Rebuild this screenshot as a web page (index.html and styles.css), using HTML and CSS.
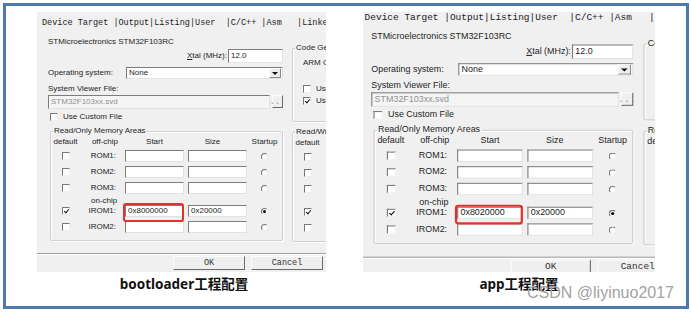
FILE: index.html
```html
<!DOCTYPE html>
<html lang="zh-CN">
<head>
  <meta charset="UTF-8">
  <meta name="viewport" content="width=device-width, initial-scale=1.0">
  <title>bootloader / app 工程配置</title>
  <link rel="stylesheet" href="styles.css">
</head>
<body>

<div class="frame">
  <div class="pair">

    <!-- bootloader 工程 -->
    <figure class="shot">
      <div class="win win-boot">
        <div class="dlg">
          <div class="tabs">Device Target |Output|Listing|User  |C/C++ |Asm   |Linker |Debug |Utilities</div>
          <div class="pane">
            <div class="col-main">
              <p class="device">STMicroelectronics STM32F103RC</p>
              <div class="xtal-row"><span><u>X</u>tal (MHz):</span><span class="field xtal">12.0</span></div>
              <div class="os-row"><span class="lbl">Operating system:</span><span class="field combo">None<i class="arrow"></i></span></div>
              <p class="svf-lbl">System Viewer File:</p>
              <div class="svf-row"><span class="field off">STM32F103xx.svd</span><span class="btn dots">...</span></div>
              <div class="check-row"><span class="cb"></span>Use Custom File</div>
              <fieldset class="group mem">
                <legend>Read/Only Memory Areas</legend>
                <div class="mhead"><span>default</span><span class="oc">off-chip</span><span class="c">Start</span><span class="c sz">Size</span><span class="c">Startup</span></div>
                <div class="mrow first"><span class="cb"></span><span class="ml">ROM1:</span><span class="field"></span><span class="field"></span><span class="rd"></span></div>
                <div class="mrow"><span class="cb"></span><span class="ml">ROM2:</span><span class="field"></span><span class="field"></span><span class="rd"></span></div>
                <div class="mrow"><span class="cb"></span><span class="ml">ROM3:</span><span class="field"></span><span class="field"></span><span class="rd"></span></div>
                <div class="onchip">on-chip</div>
                <div class="mrow irom"><span class="cb on"></span><span class="ml">IROM1:</span><span class="field hot">0x8000000</span><span class="field">0x20000</span><span class="rd on"></span></div>
                <div class="mrow"><span class="cb"></span><span class="ml">IROM2:</span><span class="field"></span><span class="field"></span><span class="rd"></span></div>
              </fieldset>
            </div>
            <div class="col-side">
              <fieldset class="group code">
                <legend>Code Generation</legend>
                <p class="arm">ARM Compiler:</p>
                <div class="check-row opt"><span class="cb"></span>Use Cross-Module Optimization</div>
                <div class="check-row opt2"><span class="cb on"></span>Use MicroLIB</div>
              </fieldset>
              <fieldset class="group mem rw">
                <legend>Read/Write Memory Areas</legend>
                <div class="mhead"><span>default</span><span class="oc">off-chip</span><span class="c">Start</span><span class="c sz">Size</span><span class="c">NoInit</span></div>
                <div class="mrow first"><span class="cb"></span><span class="ml">RAM1:</span><span class="field"></span><span class="field"></span><span class="cb"></span></div>
                <div class="mrow"><span class="cb"></span><span class="ml">RAM2:</span><span class="field"></span><span class="field"></span><span class="cb"></span></div>
                <div class="mrow"><span class="cb"></span><span class="ml">RAM3:</span><span class="field"></span><span class="field"></span><span class="cb"></span></div>
                <div class="onchip">on-chip</div>
                <div class="mrow irom"><span class="cb on"></span><span class="ml">IRAM1:</span><span class="field">0x20000000</span><span class="field">0xC000</span><span class="cb"></span></div>
                <div class="mrow"><span class="cb"></span><span class="ml">IRAM2:</span><span class="field"></span><span class="field"></span><span class="cb"></span></div>
              </fieldset>
            </div>
          </div>
          <div class="foot"><span class="btn">OK</span><span class="btn">Cancel</span><span class="btn">Defaults</span></div>
        </div>
      </div>
      <figcaption class="cap cap-boot">bootloader工程配置</figcaption>
    </figure>

    <!-- app 工程 -->
    <figure class="shot">
      <div class="win win-app">
        <div class="dlg dlg-app">
          <div class="tabs">Device Target |Output|Listing|User  |C/C++ |Asm   |Linker |Debug |Utilities</div>
          <div class="pane">
            <div class="col-main">
              <p class="device">STMicroelectronics STM32F103RC</p>
              <div class="xtal-row"><span><u>X</u>tal (MHz):</span><span class="field xtal">12.0</span></div>
              <div class="os-row"><span class="lbl">Operating system:</span><span class="field combo">None<i class="arrow"></i></span></div>
              <p class="svf-lbl">System Viewer File:</p>
              <div class="svf-row"><span class="field off">STM32F103xx.svd</span><span class="btn dots">...</span></div>
              <div class="check-row"><span class="cb"></span>Use Custom File</div>
              <fieldset class="group mem">
                <legend>Read/Only Memory Areas</legend>
                <div class="mhead"><span>default</span><span class="oc">off-chip</span><span class="c">Start</span><span class="c sz">Size</span><span class="c">Startup</span></div>
                <div class="mrow first"><span class="cb"></span><span class="ml">ROM1:</span><span class="field"></span><span class="field"></span><span class="rd"></span></div>
                <div class="mrow"><span class="cb"></span><span class="ml">ROM2:</span><span class="field"></span><span class="field"></span><span class="rd"></span></div>
                <div class="mrow"><span class="cb"></span><span class="ml">ROM3:</span><span class="field"></span><span class="field"></span><span class="rd"></span></div>
                <div class="onchip">on-chip</div>
                <div class="mrow irom"><span class="cb on"></span><span class="ml">IROM1:</span><span class="field hot">0x8020000</span><span class="field">0x20000</span><span class="rd on"></span></div>
                <div class="mrow"><span class="cb"></span><span class="ml">IROM2:</span><span class="field"></span><span class="field"></span><span class="rd"></span></div>
              </fieldset>
            </div>
            <div class="col-side">
              <fieldset class="group code">
                <legend>Code Generation</legend>
                <p class="arm">ARM Compiler:</p>
                <div class="check-row opt"><span class="cb"></span>Use Cross-Module Optimization</div>
                <div class="check-row opt2"><span class="cb on"></span>Use MicroLIB</div>
              </fieldset>
              <fieldset class="group mem rw">
                <legend>Read/Write Memory Areas</legend>
                <div class="mhead"><span>default</span><span class="oc">off-chip</span><span class="c">Start</span><span class="c sz">Size</span><span class="c">NoInit</span></div>
                <div class="mrow first"><span class="cb"></span><span class="ml">RAM1:</span><span class="field"></span><span class="field"></span><span class="cb"></span></div>
                <div class="mrow"><span class="cb"></span><span class="ml">RAM2:</span><span class="field"></span><span class="field"></span><span class="cb"></span></div>
                <div class="mrow"><span class="cb"></span><span class="ml">RAM3:</span><span class="field"></span><span class="field"></span><span class="cb"></span></div>
                <div class="onchip">on-chip</div>
                <div class="mrow irom"><span class="cb on"></span><span class="ml">IRAM1:</span><span class="field">0x20000000</span><span class="field">0xC000</span><span class="cb"></span></div>
                <div class="mrow"><span class="cb"></span><span class="ml">IRAM2:</span><span class="field"></span><span class="field"></span><span class="cb"></span></div>
              </fieldset>
            </div>
          </div>
          <div class="foot"><span class="btn">OK</span><span class="btn">Cancel</span><span class="btn">Defaults</span></div>
        </div>
      </div>
      <figcaption class="cap cap-app">app工程配置</figcaption>
    </figure>

  </div>

  <span class="mark">CSDN @liyinuo2017</span>
</div>

</body>
</html>
```

FILE: styles.css
```css
body {
  margin: 0;
  background: #fff;
  font-family: "Liberation Sans", Arial, sans-serif;
}

/* 바깥 파란 테두리 */
.frame {
  position: relative;
  margin: 3px 0 0 3px;
  width: 680px;
  height: 300px;
  border: 3px solid #4d79ad;
}

.pair {
  display: flex;
  gap: 37px;
  padding: 6px 0 0 31px;
}

.shot {
  margin: 0;
  display: flex;
  flex-direction: column;
}

.win {
  height: 260px;
  overflow: hidden;
  background: #f0f0f0;
}
.win-boot { width: 289px; }
.win-app { width: 292px; }

.cap {
  margin-top: 3px;
  font: bold 13.5px/18px "Noto Sans", "Noto Sans CJK SC", sans-serif;
  color: #111;
  text-align: center;
}
.cap-boot { padding-left: 5px; }
.cap-app { padding-left: 20px; }

.mark {
  position: absolute;
  right: 12px;
  bottom: 4px;
  font-size: 16px;
  line-height: 18px;
  color: #a2a2a2;
}

/* Keil 옵션 다이얼로그 */
.dlg {
  width: 520px;
  height: 272px;
  background: #f0f0f0;
  font-size: 8px;
  line-height: 10px;
  color: #1e1e1e;
}
.dlg p { margin: 0; }

/* app 쪽 캡처는 조금 더 크게 잘려 있음 */
.dlg-app {
  margin: -6px 0 0 -4px;
  transform: scale(1.115, 1.04);
  transform-origin: 0 0;
}

.tabs {
  height: 10px;
  padding: 6px 0 0 5px;
  font-family: "Liberation Mono", monospace;
  font-size: 8.5px;
  line-height: 10px;
  white-space: pre;
  color: #222;
}

.pane {
  display: flex;
  gap: 9px;
  padding-left: 11px;
}
.col-main {
  width: 235px;
  flex: none;
  display: flex;
  flex-direction: column;
}
.col-side {
  width: 235px;
  flex: none;
  display: flex;
  flex-direction: column;
  padding-top: 15px;
}

.device { margin-top: 9px !important; }

.field {
  box-sizing: border-box;
  display: flex;
  align-items: center;
  height: 12px;
  padding: 0 2px;
  overflow: hidden;
  white-space: nowrap;
  background: #fff;
  border: 1px solid;
  border-color: #7c7c7c #e2e2e2 #e2e2e2 #7c7c7c;
  color: #222;
}

.xtal-row {
  display: flex;
  justify-content: flex-end;
  align-items: center;
  gap: 1px;
  height: 14px;
  margin-top: 2px;
}
.xtal { width: 55px; height: 14px; }

.os-row {
  display: flex;
  align-items: center;
  height: 12px;
  margin-top: 4px;
}
.os-row .lbl { width: 78px; flex: none; }
.combo {
  width: 157px;
  justify-content: space-between;
  padding-right: 1px;
}
.arrow {
  width: 10px;
  height: 8px;
  display: flex;
  align-items: center;
  justify-content: center;
  background: #ececec;
  border: 1px solid;
  border-color: #fff #8a8a8a #8a8a8a #fff;
}
.arrow::before {
  content: '';
  border-top: 3px solid #111;
  border-left: 3px solid transparent;
  border-right: 3px solid transparent;
}

.svf-lbl { margin-top: 5px !important; }
.svf-row {
  display: flex;
  gap: 2px;
  height: 14px;
  margin-top: 1px;
}
.off {
  flex: 1;
  height: 14px;
  background: #f5f5f5;
  color: #909090;
}

.btn {
  box-sizing: border-box;
  display: flex;
  align-items: center;
  justify-content: center;
  background: #efefef;
  border: 1px solid;
  border-color: #fcfcfc #6a6a6a #6a6a6a #fcfcfc;
  font-family: "Liberation Mono", monospace;
  font-size: 8.5px;
  color: #333;
}
.dots { width: 11px; height: 13px; color: #888; }

.check-row {
  display: flex;
  align-items: center;
  gap: 5px;
  height: 10px;
  margin-top: 3px;
  padding-left: 2px;
  white-space: nowrap;
}

.cb {
  position: relative;
  flex: none;
  box-sizing: border-box;
  width: 8px;
  height: 8px;
  background: #fff;
  border: 1px solid;
  border-color: #777 #f0f0f0 #f0f0f0 #777;
}
.cb.on::after {
  content: '';
  position: absolute;
  left: 2px;
  top: 0;
  width: 2px;
  height: 4px;
  border: solid #111;
  border-width: 0 1px 1px 0;
  transform: rotate(40deg);
}

.rd {
  box-sizing: border-box;
  width: 7px;
  height: 7px;
  border-radius: 50%;
  background: #fff;
  border: 1px solid;
  border-color: #777 #eee #eee #777;
  justify-self: center;
  display: flex;
  align-items: center;
  justify-content: center;
}
.rd.on::before {
  content: '';
  width: 3px;
  height: 3px;
  border-radius: 50%;
  background: #111;
}

/* 그룹 박스 */
.group {
  margin: 0;
  padding: 0;
  min-width: 0;
  border: 1px solid #cfcfcf;
  border-radius: 2px;
  box-shadow: inset 1px 1px 0 #fff, 1px 1px 0 #fff;
}
.group legend {
  margin-left: 2px;
  padding: 0 1px;
  line-height: 10px;
}

.mem {
  margin: 4px 0 0 2px;
  padding: 1px 0 7px;
  width: 233px;
  box-sizing: border-box;
}
.rw { margin: 5px 0 0; }

.mhead,
.mrow {
  display: grid;
  grid-template-columns: 29px 45px 63px 59px 1fr;
  align-items: center;
}
.mhead { height: 10px; }
.mhead > span:first-child { text-align: center; }
.mhead .oc { text-align: right; padding-right: 7px; }
.mhead .c { text-align: center; padding-right: 4px; }
.mhead .sz { padding-right: 10px; }
.mhead .c:last-child { padding-right: 0; }

.mrow { height: 12px; margin-top: 4px; }
.mrow.first { margin-top: 3px; }
.mrow.irom { margin-top: 0; }
.mrow .cb { justify-self: center; }
.mrow .ml { text-align: right; padding-right: 9px; }
.mrow .field { width: 59px; }
.mrow > .cb:last-child { justify-self: center; }

.onchip {
  height: 9px;
  margin-top: 2px;
  padding-left: 40px;
  line-height: 9px;
}

/* 빨간 표시 */
.hot { position: relative; overflow: visible; }
.hot::after {
  content: '';
  position: absolute;
  left: -3px;
  top: -3px;
  right: -1px;
  bottom: -6px;
  border: 2px solid #e3322c;
  border-radius: 3px;
}

.code {
  padding: 5px 0 16px;
  width: 233px;
  box-sizing: border-box;
}
.arm { height: 10px; padding-left: 10px; }
.opt { margin-top: 16px; padding-left: 10px; }
.opt2 { margin-top: 2px; height: 9px; padding-left: 10px; }

.foot {
  display: flex;
  gap: 6px;
  margin-top: 11px;
  padding: 2px 0 0 136px;
  border-top: 1px solid #a0a0a0;
  box-shadow: inset 0 1px 0 #fff;
}
.foot .btn { width: 72px; height: 14px; flex: none; }
```
